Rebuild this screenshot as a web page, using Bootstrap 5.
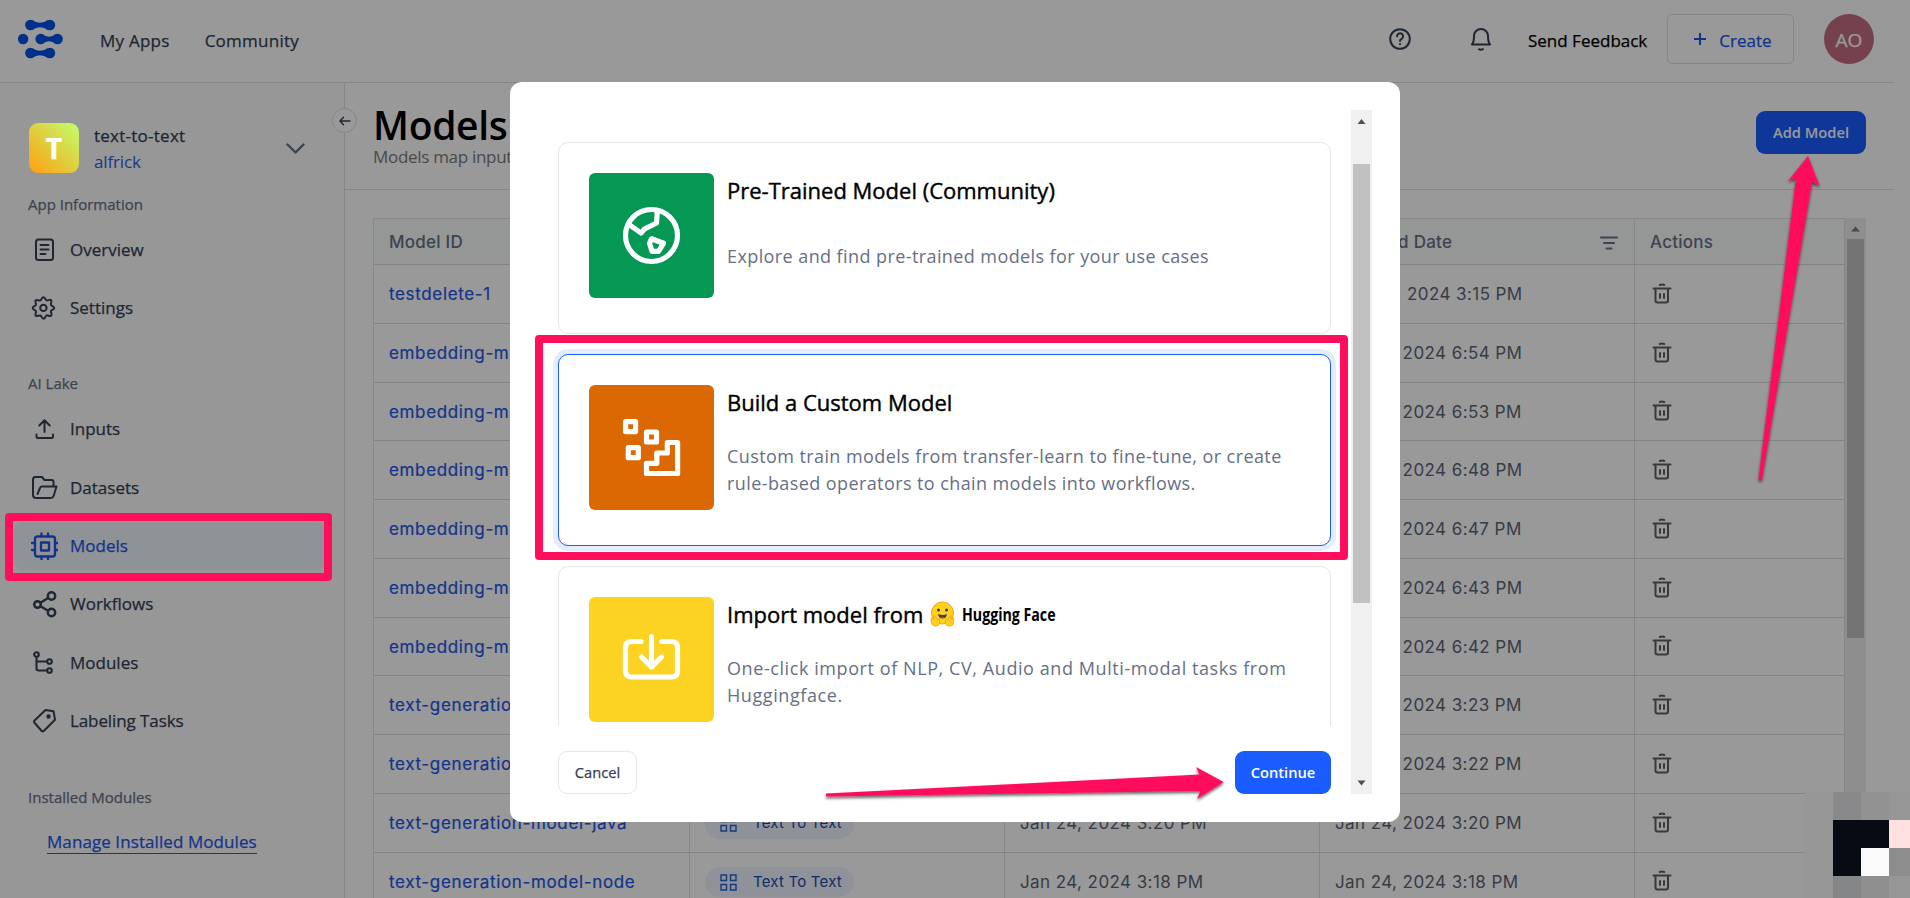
<!DOCTYPE html>
<html lang="en">
<head>
<meta charset="utf-8">
<meta name="viewport" content="width=device-width, initial-scale=1">
<title>Models</title>
<link href="https://cdn.jsdelivr.net/npm/bootstrap@5.3.0/dist/css/bootstrap.min.css" rel="stylesheet">
<style>
:root{--ink:#344054;--sub:#667085;--line:#dfe0e4;--blue:#1a5cff;--link:#1f56e8;--pink:#ff0f5b}
body{font-family:"Open Sans","Noto Sans",sans-serif;height:898px;overflow:hidden;color:var(--ink);background:#fff;font-size:17px}
svg{display:block;flex:none}
.ico{fill:none;stroke:currentColor;stroke-width:2;stroke-linecap:round;stroke-linejoin:round}
.med{-webkit-text-stroke:.25px currentColor}
.page{width:1894px;height:898px;margin-right:16px}
.topbar{height:83px;border-bottom:1px solid var(--line);padding:0 20px 4px 18px}
.topbar .links{margin:3px 0 0 37px;gap:35px;letter-spacing:.25px}
.side{width:345px;border-right:1px solid var(--line);background:#fcfcfd;position:relative}
.collapse-btn{position:absolute;left:332px;top:25px;width:25px;height:25px;border:1px solid var(--line);border-radius:50%;background:#fff}
.app-head{margin:40px 0 0 29px;height:50px}
.tile{width:50px;height:50px;border-radius:9px;background:linear-gradient(45deg,#ff9f10,#dfcf3e 50%,#c0ff70);color:#fff;font-size:29px;font-weight:700;position:relative;z-index:30}
.app-name{margin-left:15px;padding-top:1px;line-height:26px;width:193px}
.sec{padding-left:28px;font-size:15px;color:var(--sub);height:20px;line-height:20px}
.nav-i{height:48px;margin:0 18px 10.4px 14px;padding-left:16px;border-radius:10px}
.nav-i span{margin-left:12px}
.nav-i.on{background:#eff4fa;color:var(--link)}
.manage{margin:23px 0 0 47px;border-bottom:1px solid var(--blue);color:var(--link);height:24px;line-height:24px;width:210px;letter-spacing:.08px}
.main-head{height:107px;border-bottom:1px solid var(--line);padding:22px 28px 0 28px}
.main-head h1{font-size:39px;font-weight:600;color:#000;line-height:40px;margin:0;letter-spacing:-.3px}
.main-head p{font-size:17px;color:#7a7a7a;line-height:24px;margin:0;letter-spacing:-.3px}
.btn-add,.btn-go{background:var(--blue);color:#fff;border-radius:9px;font-size:14.7px;font-weight:600;height:43px;border:0}
.grid-wrap{margin:28px 28px 0 28px;height:680px;font-family:Inter,sans-serif;font-size:17px;letter-spacing:.42px}
.g-row{height:58.75px;border-bottom:1px solid #dcdcdf;border-left:1px solid var(--line)}
.g-row>div{border-right:1px solid var(--line);padding:2px 15px 0;height:100%;width:315px;flex:none;display:flex;align-items:center;white-space:nowrap;overflow:hidden;color:#5c6575}
.g-row>div:first-child{width:316px}.g-row>div:last-child{width:210px;padding-top:0}
.g-row.hd{height:47px;background:#f9fafb;border-top:1px solid var(--line);font-weight:500;letter-spacing:.25px}
.g-row.hd>div{color:var(--sub);padding-top:2px}
.g-row a{color:var(--link);font-weight:400;-webkit-text-stroke:.2px currentColor;letter-spacing:.65px;text-decoration:none}
.g-row.late{padding-left:0}.g-row.late>div:nth-child(4){padding-left:19px}
.pill{background:#eff4ff;border-radius:15px;height:30px;width:149px;color:#1849a9;font-size:15px;letter-spacing:.2px;padding-left:15px;gap:16px}
.vbar{width:21px;background:#f0f0f0;flex:none}
.vbar i{display:block;width:17px;margin:0 2px}
.shade{position:fixed;inset:0;background:rgba(0,0,0,.4);z-index:10}
.dialog-layer{position:fixed;inset:0;z-index:20;padding-top:82px}
.dlg{width:890px;height:740px;background:#fff;border-radius:12px;padding:28px 28px 28px 38px}
.dlg-list{height:616px;overflow:hidden;padding:32px 10px 0;width:793px}
.opt{height:192px;border:1px solid #e6e7ec;border-radius:10px;padding:30px;margin-bottom:20px}
.opt.on{border-color:var(--blue);box-shadow:0 0 0 5px #e4edfd}
.art{width:125px;height:125px;border-radius:6px;flex:none}
.opt-t{margin-left:13px;white-space:nowrap}
.opt-t h2{font-size:22px;font-weight:400;-webkit-text-stroke:.4px #000;color:#000;line-height:28px;margin:3px 0 27px}
.opt-t p{font-size:18px;line-height:27px;color:var(--sub);margin:0;letter-spacing:.41px}
.hf{display:inline-block;transform:scaleX(.81);transform-origin:0 50%;font-size:17.5px;font-weight:700;-webkit-text-stroke:0}
.notes{position:fixed;inset:0;z-index:40;pointer-events:none}
</style>
<script src="https://cdn.jsdelivr.net/npm/bootstrap@5.3.0/dist/js/bootstrap.bundle.min.js"></script>
</head>
<body>
<div class="page d-flex flex-column">
  <header class="topbar med d-flex align-items-center flex-shrink-0">
    <svg width="45" height="40" viewBox="0 0 45 40" fill="#0050e6"><g id="k"><circle cx="12.3" cy="6" r="5.2"/><circle cx="32" cy="6" r="5.2"/><path d="M14 1Q22 6.500 30 1V11Q22 5.500 14 11Z"/></g><use href="#k" y="28"/><circle cx="5.100" cy="20" r="5.200"/><circle cx="22.600" cy="20" r="5.200"/><circle cx="39.600" cy="20" r="5.200"/><path d="M24 15Q31 20.500 38 15V25Q31 19.500 24 25Z"/></svg>
    <div class="links d-flex"><span>My Apps</span><span>Community</span></div>
    <div class="ms-auto d-flex align-items-center">
      <svg class="ico" width="24" height="24" viewBox="0 0 24 24"><circle cx="12" cy="12" r="9.800"/><path d="M9.100 9.300a3 3 0 1 1 4.500 2.600c-1.100.6-1.600 1.100-1.600 2.100M12 17v.2"/></svg>
      <svg class="ico" style="margin-left:57px" width="24" height="26" viewBox="0 0 24 26"><path d="M3 18.500c2-2.300 2-4 2-8.500a7 7 0 0 1 14 0c0 4.500 0 6.200 2 8.500zM10 23.200q2 1.200 4 0"/></svg>
      <span class="text-black" style="margin:3px 0 0 35px;width:139px">Send Feedback</span>
      <div class="d-flex align-items-center justify-content-center" style="width:127px;height:50px;border:1px solid var(--line);border-radius:5px;color:var(--link);gap:12px;padding:3px 0 0 4px"><svg class="ico" width="14" height="14" viewBox="0 0 14 14" style="margin-top:-4px"><path d="M7 1v12M1 7h12" stroke-linecap="butt"/></svg>Create</div>
      <div class="rounded-circle d-flex align-items-center justify-content-center" style="margin-left:30px;width:50px;height:50px;background:#c46d80;color:#fff;font-size:19px;padding-top:3px">AO</div>
    </div>
  </header>
  <div class="d-flex flex-grow-1" style="min-height:0">
    <aside class="side med flex-shrink-0">
      <div class="collapse-btn d-flex align-items-center justify-content-center"><svg class="ico" width="12" height="10" viewBox="0 0 12 10" style="stroke-width:1.4"><path d="M11 5H1M4.500 1.300 1 5l3.500 3.700"/></svg></div>
      <div class="app-head d-flex align-items-center">
        <div class="tile d-flex align-items-center justify-content-center">T</div>
        <div class="app-name"><div style="letter-spacing:.25px">text-to-text</div><div style="color:#2b5ae8;letter-spacing:-.15px;-webkit-text-stroke:0">alfrick</div></div>
        <svg class="ico" width="19" height="11" viewBox="0 0 19 11" style="stroke-width:2.4;stroke:#667085;margin-left:-1px"><path d="M1.500 1.500l8 8 8-8"/></svg>
      </div>
      <div class="sec" style="margin-top:21px;margin-bottom:11.6px">App Information</div>
      <div class="nav-i d-flex align-items-center"><svg class="ico" width="28" height="28" viewBox="0 0 28 28"><rect x="6" y="3.500" width="17" height="20.500" rx="2.500"/><path d="M10.500 9h8M10.500 13.500h8M10.500 18h5"/></svg><span>Overview</span></div>
      <div class="nav-i d-flex align-items-center"><svg class="ico" width="28" height="28" viewBox="0 0 28 28"><path d="M13.400 3.200c1.800 0 1.700 2.600 3.200 3.200s3.200-1.500 4.500-.2-.7 3-.2 4.500 3.300 1.400 3.300 3.200-2.600 1.700-3.200 3.200 1.500 3.200.2 4.500-3-.7-4.500-.2-1.400 3.300-3.200 3.300-1.700-2.600-3.200-3.200-3.200 1.500-4.500.2.700-3 .2-4.500-3.300-1.400-3.300-3.200 2.600-1.700 3.200-3.200S4.400 7.600 5.700 6.300s3 .7 4.500.2 1.400-3.300 3.200-3.300z"/><circle cx="13.400" cy="13.900" r="3.200"/></svg><span>Settings</span></div>
      <div class="sec" style="margin-top:41.4px;margin-bottom:11.6px">AI Lake</div>
      <div class="nav-i d-flex align-items-center"><svg class="ico" width="28" height="28" viewBox="0 0 28 28"><path d="M14.500 17V5.500M9.300 10.500l5.200-5.200 5.200 5.200M6.500 19.500v2q0 1.500 1.500 1.500h13.500q1.500 0 1.500-1.500v-2"/></svg><span>Inputs</span></div>
      <div class="nav-i d-flex align-items-center"><svg class="ico" width="28" height="28" viewBox="0 0 28 28"><path d="M23.500 12V9q0-2-2-2h-7l-2.500-3H5.500q-2.500 0-2.500 2.500V22q0 3 3 3h15q2 0 2.600-2l2.900-9.500h-14.500q-1.500 0-2 1.500L7.500 21"/></svg><span>Datasets</span></div>
      <div class="nav-i on d-flex align-items-center"><svg class="ico" width="28" height="28" viewBox="0 0 28 28" style="stroke-width:2.300"><rect x="5" y="4.500" width="20" height="20" rx="2.500"/><rect x="11" y="10.500" width="8" height="8"/><path d="M11.500 4.500V1.500M18 4.500V1.500M11.500 27.500v-3M18 27.500v-3M5 11H2M5 18H2M28 11h-3M28 18h-3"/></svg><span>Models</span></div>
      <div class="nav-i d-flex align-items-center"><svg class="ico" width="28" height="28" viewBox="0 0 28 28" style="stroke-width:2.400"><circle cx="7.500" cy="14.500" r="3.300"/><circle cx="21.500" cy="6" r="3.700"/><circle cx="21.500" cy="22.500" r="3.700"/><path d="M10.500 12.800l7.600-4.800M10.500 16.200l7.600 4.500"/></svg><span>Workflows</span></div>
      <div class="nav-i d-flex align-items-center"><svg class="ico" width="28" height="28" viewBox="0 0 28 28" style="stroke-width:2.100"><circle cx="6.500" cy="5.500" r="2.300"/><circle cx="19.500" cy="12.500" r="2.300"/><circle cx="19.500" cy="21.500" r="2.300"/><path d="M6.500 8v11.500q0 2 2 2h8.500M6.500 12.500h10.500"/></svg><span>Modules</span></div>
      <div class="nav-i d-flex align-items-center"><svg class="ico" width="28" height="28" viewBox="0 0 28 28"><path d="M15.500 3l8 1.200 1.500 8.500-11.300 11.300q-1 .8-2 0L4.300 15.500q-.8-1 0-1.800z"/><circle cx="18.500" cy="9.500" r="1.200" fill="currentColor"/></svg><span style="letter-spacing:-.1px">Labeling Tasks</span></div>
      <div class="sec" style="margin-top:42px">Installed Modules</div>
      <div class="manage text-nowrap">Manage Installed Modules</div>
    </aside>
    <main class="flex-grow-1" style="min-width:0">
      <div class="main-head d-flex justify-content-between">
        <div><h1>Models</h1><p>Models map input</p></div>
        <button class="btn-add" style="width:110px;margin-top:6px">Add Model</button>
      </div>
      <div class="grid-wrap d-flex">
        <div style="width:1472px;flex:none">
          <div class="g-row hd d-flex"><div>Model ID</div><div></div><div></div><div class="justify-content-between"><span>Modified Date</span><svg class="ico" width="18" height="14" viewBox="0 0 18 14" style="margin-right:1px"><path d="M1 1.500h16M4 7h10M6.500 12.500h5"/></svg></div><div>Actions</div></div>
          <div id="rows"></div>
        </div>
        <div class="vbar" style="background:#ededed"><svg width="21" height="21" viewBox="0 0 21 21"><path d="M6 13.500l4.500-5 4.500 5z" fill="#7b7b7b"/></svg><i style="height:399px;background:#c1c1c1"></i></div>
      </div>
    </main>
  </div>
</div>

<div class="shade"></div>

<div class="dialog-layer d-flex justify-content-center align-items-start">
  <section class="dlg d-flex justify-content-between">
    <div>
      <div class="dlg-list">
        <div class="opt d-flex">
          <svg class="art" viewBox="0 0 125 125"><rect width="125" height="125" fill="#059855"/><g fill="none" stroke="#fff" stroke-width="5.200" stroke-linejoin="round"><circle cx="62.500" cy="62.500" r="26"/><path d="M40 51.500L52 60l3.500-4 12-6 .8-11.500M62.500 65.800l12 4.500-5 8h-6.500l-2.500-8z"/></g></svg>
          <div class="opt-t"><h2>Pre-Trained Model (Community)</h2><p style="margin-top:39px">Explore and find pre-trained models for your use cases</p></div>
        </div>
        <div class="opt on d-flex">
          <svg class="art" viewBox="0 0 125 125"><rect width="125" height="125" fill="#dc6803"/><g fill="none" stroke="#fff" stroke-width="5.200" stroke-linejoin="round"><rect x="36.600" y="36.600" width="10" height="10"/><rect x="57.500" y="47" width="10" height="10"/><rect x="39.300" y="62.700" width="10" height="10"/><path d="M57.500 88.500V78.300h10.300V68h10.500V57.500h10.300v31z"/></g></svg>
          <div class="opt-t"><h2>Build a Custom Model</h2><p>Custom train models from transfer-learn to fine-tune, or create<br>rule-based operators to chain models into workflows.</p></div>
        </div>
        <div class="opt d-flex">
          <svg class="art" viewBox="0 0 125 125"><rect width="125" height="125" fill="#fcd322"/><g fill="none" stroke="#fff" stroke-width="5.200" stroke-linecap="round" stroke-linejoin="round"><path d="M52 44.500H42.500q-6 0-6 6V74q0 6 6 6h40q6 0 6-6V50.500q0-6-6-6H73M62.500 39.500V70M52.500 60l10 10 10-10"/></g></svg>
          <div class="opt-t"><h2 class="d-flex align-items-center"><span>Import model from</span>
            <svg width="25" height="26" viewBox="0 0 25 26" style="margin:0 7px 0 7px"><circle cx="12.500" cy="12" r="11" fill="#ffd21e" stroke="#ff9d0b"/><circle cx="8.500" cy="9" r="1.500" fill="#3a3b45"/><circle cx="16.500" cy="9" r="1.500" fill="#3a3b45"/><path d="M8 13q4.500 2 9 0-.8 4.500-4.500 4.500T8 13z" fill="#3a3b45"/><path d="M10.500 16.500q2-1.500 4 0-2 1.500-4 0z" fill="#f94040"/><path d="M1.500 17l2.500 1-.5-3q1.500-1 2 1l2 2.500q2-1.500 2 .5 1 3.500-1.500 5.500Q4.500 26 2 23.500.5 20 1.500 17zM23.500 17l-2.500 1 .5-3q-1.500-1-2 1l-2 2.500q-2-1.500-2 .5-1 3.500 1.500 5.500 3.500 1.500 6-1 1.500-3.500.5-6.500z" fill="#ffd21e" stroke="#ff9d0b" stroke-width=".9"/></svg>
            <span class="hf">Hugging Face</span></h2><p style="letter-spacing:.58px">One-click import of NLP, CV, Audio and Multi-modal tasks from<br>Huggingface.</p></div>
        </div>
      </div>
      <div class="d-flex justify-content-between" style="padding:25px 10px 0">
        <button class="bg-white med" style="width:79px;height:43px;border:1px solid #e6e7ec;border-radius:9px;font-size:14.7px;color:var(--ink)">Cancel</button>
        <button class="btn-go" style="width:96px">Continue</button>
      </div>
    </div>
    <div class="vbar d-flex flex-column"><svg width="21" height="54" viewBox="0 0 21 54"><path d="M6.500 14l4-5 4 5z" fill="#505050"/></svg><i style="height:439px;background:#c1c1c1"></i><svg class="mt-auto" width="21" height="21" viewBox="0 0 21 21"><path d="M6.500 7.500h8l-4 5z" fill="#505050"/></svg></div>
  </section>
</div>

<svg class="notes" width="1910" height="898" viewBox="0 0 1910 898">
  <defs><filter id="sh" x="-20%" y="-20%" width="140%" height="160%"><feDropShadow dx="0" dy="2" stdDeviation="1.500" flood-opacity=".6"/></filter></defs>
  <g shape-rendering="crispEdges"><path d="M1805 792h105v106h-105z" fill="#969696"/><path d="M1833 792h28v28h-28z" fill="#89898b"/><path d="M1861 792h28v28h-28z" fill="#929292"/><path d="M1833 820h56v28h-28v28h-28z" fill="#070b14"/><path d="M1889 820h21v28h-21z" fill="#ffe1e2"/><path d="M1861 848h28v28h-28z" fill="#fafafa"/><path d="M1889 848h21v28h-21z" fill="#8d8d8d"/><path d="M1833 876h28v22h-28z" fill="#848688"/><path d="M1861 876h28v22h-28z" fill="#8f8f8f"/></g>
  <g fill="none" stroke="#ff0f5b" stroke-width="8" stroke-linejoin="round"><rect x="9" y="517" width="319" height="60"/><rect x="539" y="339" width="805" height="217"/></g>
  <g fill="#ff0f5b" filter="url(#sh)"><path d="M1808 156l11.500 29.500-7.500-3.500L1762 479q-1.500 2.500-3.500 0L1796 178l-8 3z"/><path d="M1223.700 782L1197 799l3.500-8L826 796.500v-3L1199.500 774.500 1196 767z"/></g>
</svg>

<script>
// The last two rows show below the dialog; the others only reach out at its sides.
const data=[["testdelete-1","Feb 28, 2024 3:15 PM"],["embedding-mo","Jan 24, 2024 6:54 PM"],["embedding-mo","Jan 24, 2024 6:53 PM"],["embedding-mo","Jan 24, 2024 6:48 PM"],["embedding-mo","Jan 24, 2024 6:47 PM"],["embedding-mo","Jan 24, 2024 6:43 PM"],["embedding-mo","Jan 24, 2024 6:42 PM"],["text-generation","Jan 24, 2024 3:23 PM"],["text-generation","Jan 24, 2024 3:22 PM"],["text-generation-model-java","Jan 24, 2024 3:20 PM",1],["text-generation-model-node","Jan 24, 2024 3:18 PM",1]];
const trash='<svg class="ico" width="24" height="24" viewBox="0 0 24 24" style="color:#606060"><path d="M3.500 6.500h17M5.500 7v11.500q0 2 2 2h8.500q2 0 2-2V7M9.800 3q2.200-1 4.400 0M10 12v4M14 12v4"/></svg>';
const grid='<svg width="17" height="17" viewBox="0 0 17 17" fill="none" stroke="#2b5fd0" stroke-width="1.400"><path d="M1 1h5.500v5.500H1zM10.500 1H16v5.500h-5.500zM1 10.500h5.500V16H1zM10.500 10.500H16V16h-5.500z"/></svg>';
document.getElementById("rows").innerHTML=data.map(([m,d,full],i)=>`<div class="g-row d-flex${i?"":" late"}"><div><a href="#">${m}</a></div><div>${full?`<span class="pill d-flex align-items-center">${grid}Text To Text</span>`:""}</div><div>${full?d:""}</div><div>${d}</div><div>${trash}</div></div>`).join("");
</script>
</body>
</html>
